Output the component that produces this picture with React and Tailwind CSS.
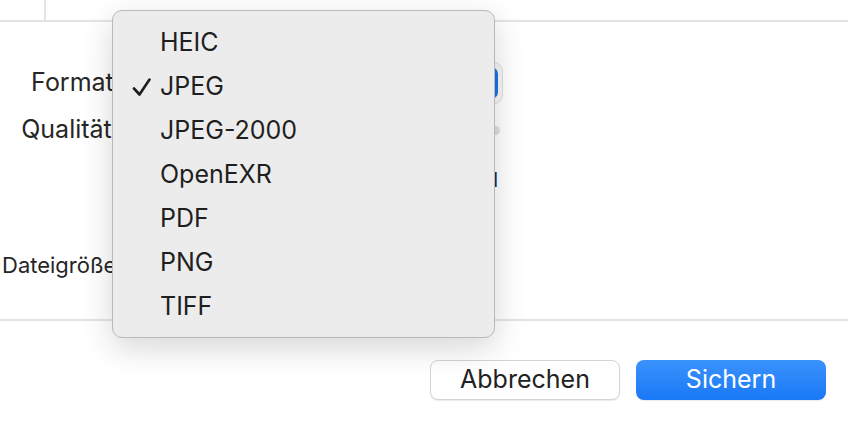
import React from "react";

const formats = ["HEIC", "JPEG", "JPEG-2000", "OpenEXR", "PDF", "PNG", "TIFF"];

const FormatMenu = ({ selected }) => (
  <div className="absolute left-[112px] top-[10px] w-[383px] rounded-[10px] border border-[#b9b9b9] bg-[#ececec] pb-[8px] pt-[10px] shadow-[0_10px_32px_rgba(0,0,0,0.16)]">
    {formats.map((f) => (
      <div key={f} className="relative flex h-[44px] items-center pl-[47px] text-[25px] text-[#1f1f1f]">
        {f === selected && (
          <svg className="absolute left-[19px] top-[13px]" width="20" height="19" viewBox="0 0 20 19">
            <path d="M2 10.5 L7.5 16.5 L17.5 1.5" fill="none" stroke="#1e1e1e" strokeWidth="2.6" strokeLinecap="round" strokeLinejoin="round" />
          </svg>
        )}
        {f}
      </div>
    ))}
  </div>
);

export default function App() {
  return (
    <div className="relative h-[422px] w-[848px] overflow-hidden bg-white font-['Inter','Liberation_Sans',sans-serif] text-[#262626]">
      <div className="flex h-[22px] border-b-2 border-[#e4e4e4]">
        <div className="w-[46px] border-r-2 border-[#e4e4e4]" />
      </div>

      <div className="flex h-[299px] flex-col border-b-2 border-[#e4e4e4]">
        <div className="mt-[40px] flex h-[42px] items-center">
          <div className="w-[121px] text-right text-[25px]">Format:</div>
          <div className="ml-[19px] flex h-[42px] w-[363px] items-center justify-end rounded-[9px] border border-[#dcdcdc] bg-[#f7f7f7] p-[4px]">
            <div className="h-[32px] w-[28px] rounded-[7px] bg-[#1a73e8]" />
          </div>
        </div>

        <div className="mt-[14px] flex h-[24px] items-center">
          <div className="w-[119px] text-right text-[25px]">Qualität:</div>
          <div className="ml-[23px] h-[9px] w-[358px] rounded-full bg-[#dedede]" />
        </div>

        <div className="ml-[142px] mt-[26px] flex w-[356px] justify-end text-[20px] leading-[24px]">
          <span>Optimal</span>
        </div>

        <div className="mt-[61px] flex h-[24px] items-center">
          <div className="pl-[2px] text-[22px]">Dateigröße:</div>
        </div>
      </div>

      <div className="flex justify-end gap-[16px] pr-[22px] pt-[39px]">
        <button className="h-[40px] w-[190px] rounded-[8px] border border-[#d4d4d4] bg-white text-[25px] text-[#222] shadow-[0_1px_1px_rgba(0,0,0,0.08)]">
          Abbrechen
        </button>
        <button className="h-[40px] w-[190px] rounded-[8px] bg-gradient-to-b from-[#3a92fb] to-[#1878f6] text-[25px] text-white shadow-[0_1px_1px_rgba(0,0,0,0.08)]">
          Sichern
        </button>
      </div>

      <FormatMenu selected="JPEG" />
    </div>
  );
}
